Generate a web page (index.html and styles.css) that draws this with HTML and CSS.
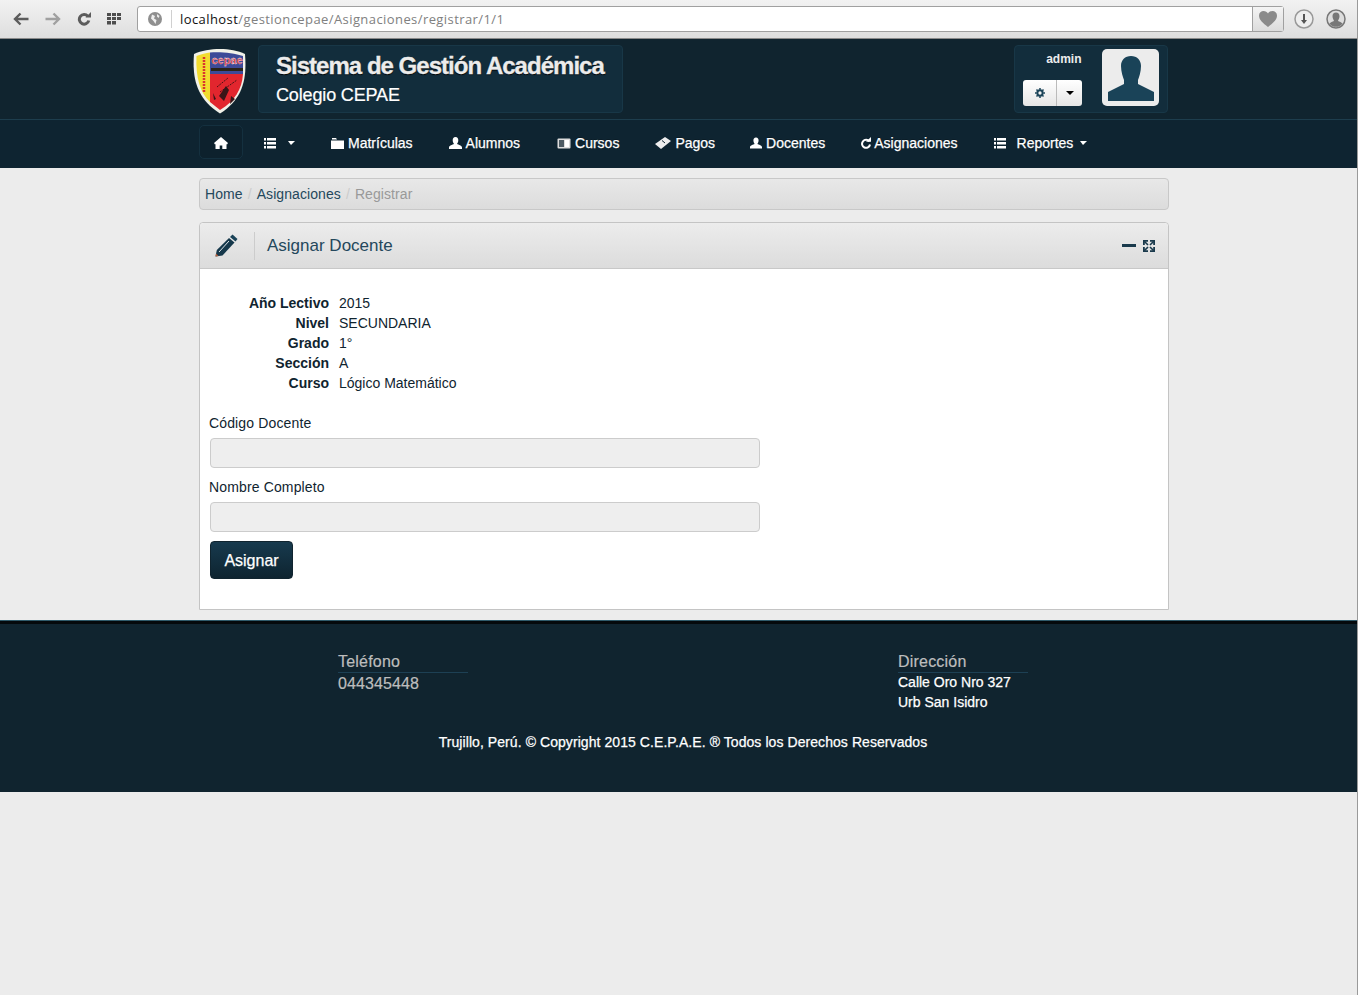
FILE: index.html
```html
<!DOCTYPE html>
<html lang="en">
<head>
    <meta charset="UTF-8">
    <meta name="viewport" content="width=device-width, initial-scale=1.0">
    <title>Asignar Docente</title>
    <link rel="stylesheet" href="styles.css">
</head>
<body>

    <!-- browser toolbar -->
    <div class="toolbar">
        <div class="tool-icons">
            <svg class="tool" width="16" height="14" viewBox="0 0 16 14"><path d="M7.500 1.500 2 7l5.500 5.500M3 7h12.500" fill="none" stroke="#5c5c5c" stroke-width="2.400"/></svg>
            <svg class="tool" width="16" height="14" viewBox="0 0 16 14"><path d="M8.500 1.500 14 7l-5.500 5.500M13 7H.5" fill="none" stroke="#a0a0a0" stroke-width="2.400"/></svg>
            <svg class="tool" width="14" height="14" viewBox="0 0 14 14"><path d="M10.800 4.200A4.800 4.800 0 1 0 11.800 8.500" fill="none" stroke="#5c5c5c" stroke-width="3"/><path d="M8.500 5.500h5.500V0z" fill="#5c5c5c"/></svg>
            <svg class="tool" width="14" height="12" viewBox="0 0 14 12" fill="#4d4d4d"><path d="M0 0h4v3H0zM5 0h4v3H5zM10 0h4v3h-4zM0 4h4v3H0zM5 4h4v3H5zM10 4h4v3h-4zM0 8h4v3.500H0zM5 8h4v3.500H5z"/></svg>
        </div>
        <div class="url-box">
            <svg class="globe" width="14" height="14" viewBox="0 0 14 14"><circle cx="7" cy="7" r="7" fill="#8f8f8f"/><path d="M4 2.500 7 4 6 6.500 8.500 8 7.500 12 5.500 9 3 6.500zM9 2l2.500 2-1 2L9 4.500z" fill="#eee"/></svg>
            <span class="url-text"><span class="url-host">localhost</span>/gestioncepae/Asignaciones/registrar/1/1</span>
            <div class="url-heart">
                <svg width="18" height="16" viewBox="0 0 18 16"><path d="M9 16C4 12 0 9 0 4.500 0 1.500 2.300 0 4.500 0 6.500 0 8.200 1 9 2.500 9.800 1 11.500 0 13.500 0 15.700 0 18 1.500 18 4.500 18 9 14 12 9 16z" fill="#8a8a8a"/></svg>
            </div>
        </div>
        <svg class="round-icon" width="20" height="20" viewBox="0 0 20 20"><circle cx="10" cy="10" r="9" fill="#eee" stroke="#999" stroke-width="1.500"/><path d="M10 5v7" stroke="#555" stroke-width="2"/><path d="M7 11h6l-3 4z" fill="#555"/></svg>
        <svg class="round-icon" width="20" height="20" viewBox="0 0 20 20"><circle cx="10" cy="10" r="9" fill="#ddd" stroke="#777" stroke-width="1.500"/><path d="M10 3.500c2.300 0 3.500 1.700 3.500 3.800S12.300 11 12 12c1.500.7 3.500 1.200 4.500 2.500A8 8 0 0 1 3.500 14.500C4.500 13.200 6.500 12.700 8 12c-.3-1-1.500-2.600-1.500-4.700S7.700 3.500 10 3.500z" fill="#777"/></svg>
    </div>

    <header class="site-header">
        <div class="logo-col">
            <svg width="54" height="65" viewBox="0 0 54 65">
                <path d="M27 0C36 0 45 1.500 52 5 54 30 50 50 27 64.500 4 50-1 30 1 5 8 1.500 18 0 27 0z" fill="#f1f1e8"/>
                <path d="M3.500 7C8.500 5 13 4 17 3.500V53C7 44 2.500 28 3.500 7z" fill="#f2dc2e"/>
                <path d="M17 3.500C27 2.500 41 4 50 7L50 25H17z" fill="#3d4a98"/>
                <path d="M17 25H50C49 40 42 52 27 61L17 53z" fill="#e2262e"/>
                <text x="34" y="15" class="logo-word">cepae</text>
                <rect x="18" y="19" width="32" height="3" fill="#2a2418"/>
                <path d="M24 38 35 29M27 43 44 31" stroke="#4a1214" stroke-width="1" stroke-dasharray="2 1"/>
                <path d="M26 47 33 37 36 41 31 52zM38 47l4 3-5 5zM20 44l3 6-2 1z" fill="#3a1518"/>
                <path d="M11 8v36" stroke="#d9352e" stroke-width="2.500" stroke-dasharray="2 1"/>
            </svg>
        </div>
        <div class="title-box">
            <h1>Sistema de Gestión Académica</h1>
            <p>Colegio CEPAE</p>
        </div>
        <div class="user-box">
            <div class="user-info">
                <span class="user-name">admin</span>
                <div class="btn-group">
                    <button class="gear-btn">
                        <svg width="10" height="10" viewBox="0 0 12 12"><circle cx="6" cy="6" r="3.200" fill="none" stroke="#1a4358" stroke-width="2.400"/><path d="M6 0v2M6 10v2M0 6h2M10 6h2M1.800 1.800l1.400 1.400M8.800 8.800l1.400 1.400M1.800 10.200l1.400-1.400M8.800 3.200l1.400-1.400" stroke="#1a4358" stroke-width="1.800"/></svg>
                    </button>
                    <button class="caret-btn"><span class="caret caret-dark"></span></button>
                </div>
            </div>
            <div class="avatar">
                <svg width="46" height="45" viewBox="0 0 46 45"><path d="M23 0C29 0 33 4 33 10c0 6-2 11-3 14v4l16 8v9H0v-9l16-8v-4c-1-3-3-8-3-14C13 4 17 0 23 0z" fill="#1a4358"/></svg>
            </div>
        </div>
    </header>

    <nav class="site-nav">
        <ul>
            <li class="home-item"><a href="#"><svg width="14" height="12" viewBox="0 0 14 12" fill="#fff"><path d="M7 0 14 6l-1 1.500-.5-.4V12H8.300V8.500H5.700V12H1.500V7.100L1 7.500 0 6z"/></svg></a></li>
            <li><a href="#"><svg class="list-icon" width="12" height="11" viewBox="0 0 12 11" fill="#fff"><path d="M0 0h2v2.500H0zM3 0h9v2.500H3zM0 4h2v2.500H0zM3 4h9v2.500H3zM0 8h2v2.500H0zM3 8h9v2.500H3z"/></svg><span class="caret caret-nav"></span></a></li>
            <li><a href="#"><svg width="13" height="12" viewBox="0 0 13 12" fill="#fff"><path d="M0 3.500h13V12H0zM1 2.500V1h4l1 1.500z"/></svg>Matrículas</a></li>
            <li><a href="#" class="link-alumnos"><svg width="13" height="12" viewBox="0 0 13 12" fill="#fff"><path d="M6.500 0C8.500 0 9.300 1.500 9.300 3.200 9.300 4.800 8.500 6.200 8 7c1.500.8 5 1.500 5 3.500V12H0v-1.500C0 8.500 3.500 7.800 5 7 4.500 6.200 3.700 4.800 3.700 3.200 3.700 1.500 4.500 0 6.500 0z"/></svg>Alumnos</a></li>
            <li><a href="#"><svg width="14" height="11" viewBox="0 0 14 11"><rect x=".5" y=".5" width="13" height="10" rx="1" fill="#ddd"/><rect x="2" y="2" width="5" height="7" fill="#10242f" opacity=".7"/><rect x="8" y="2" width="4" height="7" fill="#fff"/></svg>Cursos</a></li>
            <li><a href="#"><svg width="16" height="12" viewBox="0 0 16 12"><path d="M0 7 10 0l6 4-10 8z" fill="#eee"/><path d="M7 3.500l3 2.500" stroke="#10242f" stroke-width="1"/></svg>Pagos</a></li>
            <li class="item-docentes"><a href="#"><svg width="12" height="12" viewBox="0 0 13 12" fill="#fff"><path d="M6.500 0C8.500 0 9.300 1.500 9.300 3.200 9.300 4.800 8.500 6.200 8 7c1.500.8 5 1.500 5 3.500V12H0v-1.500C0 8.500 3.500 7.800 5 7 4.500 6.200 3.700 4.800 3.700 3.200 3.700 1.500 4.500 0 6.500 0z"/></svg>Docentes</a></li>
            <li><a href="#" class="link-asign"><svg width="10" height="12" viewBox="0 0 10 12"><path d="M8.300 4.500A4 4 0 1 0 9 7.500" fill="none" stroke="#fff" stroke-width="2"/><path d="M5 4.800h5V0z" fill="#fff"/></svg>Asignaciones</a></li>
            <li><a href="#"><svg class="list-icon wide" width="12" height="11" viewBox="0 0 12 11" fill="#fff"><path d="M0 0h2v2.500H0zM3 0h9v2.500H3zM0 4h2v2.500H0zM3 4h9v2.500H3zM0 8h2v2.500H0zM3 8h9v2.500H3z"/></svg>Reportes<span class="caret caret-nav"></span></a></li>
        </ul>
    </nav>

    <main class="content">
        <ul class="breadcrumb">
            <li><a href="#">Home</a></li>
            <li class="sep">/</li>
            <li><a href="#">Asignaciones</a></li>
            <li class="sep">/</li>
            <li class="active">Registrar</li>
        </ul>

        <section class="panel">
            <div class="panel-head">
                <div class="panel-icon">
                    <svg width="23" height="23" viewBox="0 0 23 23"><path d="M17.500 0.500 22.500 5 20.500 7.500 15 3z" fill="#1a4358"/><path d="M14 4 19.500 8.500 7.500 21.500 0.500 22.500 1.800 16z" fill="#16384b"/><path d="M14 7 4 18" stroke="#dfe6ea" stroke-width="1"/><path d="M.5 22.500l.5-3 2.500 2.500z" fill="#b8603c"/></svg>
                </div>
                <h2>Asignar Docente</h2>
                <div class="panel-tools">
                    <span class="minus"></span>
                    <svg width="12" height="12" viewBox="0 0 12 12"><g fill="#1a3a4c"><path d="M0 0h5v1.800H1.800V5H0zM12 0v5h-1.800V1.800H7V0zM0 12V7h1.800v3.200H5V12zM12 12H7v-1.800h3.200V7H12z"/></g><path d="M1.500 1.500 5 5M10.500 1.500 7 5M1.500 10.500 5 7M10.500 10.500 7 7" stroke="#1a3a4c" stroke-width="1.600"/></svg>
                </div>
            </div>
            <div class="panel-body">
                <dl class="info">
                    <dt>Año Lectivo</dt><dd>2015</dd>
                    <dt>Nivel</dt><dd>SECUNDARIA</dd>
                    <dt>Grado</dt><dd>1°</dd>
                    <dt>Sección</dt><dd>A</dd>
                    <dt>Curso</dt><dd>Lógico Matemático</dd>
                </dl>
                <form class="assign-form">
                    <label for="codigo">Código Docente</label>
                    <input id="codigo" type="text" disabled>
                    <label for="nombre">Nombre Completo</label>
                    <input id="nombre" type="text" disabled>
                    <button type="button" class="btn-assign">Asignar</button>
                </form>
            </div>
        </section>
    </main>

    <footer class="site-footer">
        <div class="footer-inner">
            <div class="footer-cols">
                <div class="footer-col">
                    <h4>Teléfono</h4>
                    <p class="phone">044345448</p>
                </div>
                <div class="footer-col">
                    <h4>Dirección</h4>
                    <p class="address">Calle Oro Nro 327</p>
                    <p>Urb San Isidro</p>
                </div>
            </div>
            <p class="copyright">Trujillo, Perú. © Copyright 2015 C.E.P.A.E. ® Todos los Derechos Reservados</p>
        </div>
    </footer>

</body>
</html>
```

FILE: styles.css
```css
/* Basic Styling */
* {
    box-sizing: border-box;
}

body {
    font-family: "Liberation Sans", Arial, sans-serif;
    font-size: 14px;
    line-height: 20px;
    margin: 0;
    padding: 0;
    min-height: 995px;
    background-color: #ececec;
    color: #10242f;
    border-right: 1px solid #9a9a9a;
}

/* Browser toolbar */
.toolbar {
    display: flex;
    align-items: center;
    height: 39px;
    padding: 0 11px 0 13px;
    background: linear-gradient(#f2f2f2, #dedede);
    border-bottom: 1px solid #8a8a8a;
}

.tool-icons {
    display: flex;
    align-items: center;
    width: 124px;
    gap: 16px;
}

.url-box {
    display: flex;
    align-items: center;
    width: 1147px;
    height: 26px;
    background: #fff;
    border: 1px solid #a0a0a0;
    border-radius: 3px;
    padding-left: 10px;
}

.globe {
    margin-right: 9px;
}

.url-text {
    flex: 1;
    border-left: 1px solid #d0d0d0;
    padding-left: 8px;
    font-family: "Open Sans", sans-serif;
    font-size: 13px;
    line-height: 18px;
    letter-spacing: 0.42px;
    color: #808080;
}

.url-host {
    color: #111;
}

.url-heart {
    display: flex;
    align-items: center;
    justify-content: center;
    width: 31px;
    height: 24px;
    border-left: 1px solid #a0a0a0;
    background: linear-gradient(#f4f4f4, #dcdcdc);
}

.round-icon {
    margin-left: 10px;
}

.round-icon + .round-icon {
    margin-left: 12px;
}

/* Header */
.site-header {
    display: flex;
    height: 81px;
    padding: 6px 189px 0 193px;
    background-color: #10242f;
    border-bottom: 1px solid #1d3d4d;
}

.logo-col {
    width: 65px;
    padding-top: 4px;
}

.logo-word {
    font-family: "Liberation Sans", sans-serif;
    font-size: 11px;
    font-weight: bold;
    fill: #d8232a;
    stroke: #fff;
    stroke-width: 0.3px;
    text-anchor: middle;
}

.title-box {
    width: 365px;
    height: 68px;
    padding: 6px 17px;
    background-color: #122d3c;
    border: 1px solid #183747;
    border-radius: 4px;
}

.title-box h1 {
    margin: 0;
    font-size: 24px;
    line-height: 28px;
    font-weight: bold;
    letter-spacing: -0.98px;
    white-space: nowrap;
    color: #ececec;
    text-shadow: 0 1px 1px #000;
    -webkit-text-stroke: 0.3px #ececec;
}

.title-box p {
    margin: 1px 0 0;
    font-size: 18px;
    line-height: 28px;
    letter-spacing: -0.15px;
    color: #fff;
    -webkit-text-stroke: 0.2px #fff;
}

.user-box {
    display: flex;
    width: 154px;
    height: 68px;
    margin-left: auto;
    padding: 3px 8px 0 8px;
    background-color: #122d3c;
    border: 1px solid #183747;
    border-radius: 4px;
}

.user-info {
    display: flex;
    flex-direction: column;
    align-items: flex-end;
    width: 60px;
}

.user-name {
    margin-top: 1px;
    padding-right: 1px;
    font-size: 12px;
    line-height: 18px;
    font-weight: bold;
    color: #ececec;
}

.btn-group {
    display: flex;
    margin-top: 12px;
    height: 26px;
}

.btn-group button {
    display: flex;
    align-items: center;
    justify-content: center;
    height: 26px;
    padding: 0;
    border: 0;
    background: linear-gradient(#fff, #e6e6e6);
}

.gear-btn {
    width: 34px;
    border-radius: 3px 0 0 3px;
    border-right: 1px solid #bbb !important;
}

.caret-btn {
    width: 25px;
    border-radius: 0 3px 3px 0;
}

.caret {
    display: inline-block;
    width: 0;
    height: 0;
    border-top: 4px solid #000;
    border-left: 4px solid transparent;
    border-right: 4px solid transparent;
}

.caret-nav {
    border-top-color: #fff;
    border-left-width: 3px;
    margin-left: 7px;
}

.avatar {
    display: flex;
    align-items: flex-end;
    justify-content: center;
    width: 57px;
    height: 57px;
    margin-left: 20px;
    padding-bottom: 5px;
    background-color: #ececec;
    border-radius: 5px;
}

/* Nav */
.site-nav {
    height: 48px;
    padding: 5px 0 0 199px;
    background-color: #0e2431;
}

.site-nav ul {
    display: flex;
    list-style: none;
    margin: 0;
    padding: 0;
}

.site-nav a {
    display: flex;
    align-items: center;
    height: 34px;
    padding: 2px 18px 0;
    color: #fff;
    text-decoration: none;
    text-shadow: 0 -1px 0 rgba(0, 0, 0, 0.25);
    -webkit-text-stroke: 0.25px #fff;
}

.site-nav a svg {
    flex-shrink: 0;
    margin-right: 4px;
}

.site-nav .link-alumnos {
    padding-right: 19px;
}

.site-nav .item-docentes {
    margin-left: -1px;
}

.site-nav .link-asign svg {
    margin-right: 3px;
}

.site-nav .list-icon {
    margin-right: 5px;
}

.site-nav .list-icon.wide {
    margin-right: 11px;
}

.site-nav .home-item {
    margin-right: 3px;
}

.site-nav .home-item a {
    width: 44px;
    padding: 2px 14px 0;
    background-color: #0d212d;
    border: 1px solid #14303f;
    border-radius: 5px;
}

.site-nav .home-item svg {
    margin-right: 0;
}

/* Content */
.content {
    width: 970px;
    margin-left: 199px;
    padding-top: 10px;
}

.breadcrumb {
    display: flex;
    gap: 5px;
    height: 32px;
    margin: 0 0 12px;
    padding: 5px;
    list-style: none;
    letter-spacing: 0.08px;
    background: linear-gradient(#e8e8e8, #dcdcdc);
    border: 1px solid #c8c8c8;
    border-radius: 4px;
}

.breadcrumb a {
    color: #24485c;
    text-decoration: none;
}

.breadcrumb .sep {
    color: #ccc;
}

.breadcrumb .active {
    color: #999;
}

.panel {
    height: 388px;
    background-color: #fff;
    border: 1px solid #c4c4c4;
    border-radius: 4px 4px 0 0;
}

.panel-head {
    display: flex;
    align-items: center;
    height: 46px;
    background: linear-gradient(#ececec, #dcdcdc);
    border-bottom: 1px solid #c8c8c8;
    border-radius: 4px 4px 0 0;
}

.panel-icon {
    display: flex;
    align-items: center;
    height: 28px;
    padding: 0 16px 0 15px;
    border-right: 1px solid #ccc;
}

.panel-head h2 {
    margin: 0 0 0 12px;
    font-size: 17px;
    font-weight: normal;
    color: #24485c;
}

.panel-tools {
    display: flex;
    align-items: center;
    gap: 7px;
    margin-left: auto;
    padding-right: 13px;
}

.minus {
    width: 14px;
    height: 3px;
    background-color: #1a3a4c;
}

.panel-body {
    padding: 24px 10px 0;
}

.info {
    display: grid;
    grid-template-columns: 120px 1fr;
    column-gap: 10px;
    margin: 0 0 20px -1px;
}

.info dt {
    text-align: right;
    font-weight: bold;
}

.info dd {
    margin: 0;
}

.assign-form label {
    display: block;
    margin: 0 0 5px -1px;
    letter-spacing: 0.14px;
}

.assign-form input {
    display: block;
    width: 550px;
    height: 30px;
    margin-bottom: 9px;
    background-color: #eeeeee;
    border: 1px solid #ccc;
    border-radius: 4px;
}

.btn-assign {
    display: block;
    width: 83px;
    height: 38px;
    margin-top: 9px;
    padding-top: 3px;
    font-family: inherit;
    font-size: 16px;
    color: #fff;
    -webkit-text-stroke: 0.25px #fff;
    background: linear-gradient(#173a4e, #0e2430);
    border: 1px solid #10242f;
    border-radius: 4px;
}

/* Footer */
.site-footer {
    height: 172px;
    margin-top: 10px;
    background-color: #10242f;
    border-top: 1px solid #2f5a6a;
    box-shadow: inset 0 3px 0 #05090c;
}

.footer-inner {
    width: 690px;
    margin-left: 338px;
    padding-top: 31px;
}

.footer-cols {
    display: flex;
    justify-content: space-between;
}

.footer-col {
    width: 130px;
}

.footer-col h4 {
    margin: 0;
    font-size: 16px;
    line-height: 20px;
    font-weight: normal;
    letter-spacing: 0.2px;
    color: #bdbdbd;
    border-bottom: 1px solid #1d4054;
    -webkit-text-stroke: 0.2px #bdbdbd;
}

.footer-col p {
    margin: 0;
    color: #fff;
    line-height: 20px;
    -webkit-text-stroke: 0.25px #fff;
}

.footer-col .address {
    margin-top: -1px;
}

.footer-col .phone {
    margin-top: 1px;
    font-size: 16px;
    letter-spacing: 0.1px;
    color: #bdbdbd;
    -webkit-text-stroke: 0.2px #bdbdbd;
}

.copyright {
    margin: 20px 0 0;
    text-align: center;
    color: #fff;
    letter-spacing: 0.07px;
    -webkit-text-stroke: 0.25px #fff;
}
```
